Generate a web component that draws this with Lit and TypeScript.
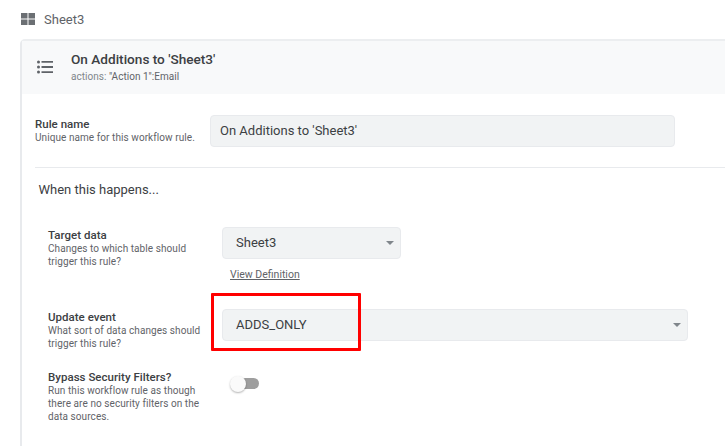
import { LitElement, html, css } from "lit";
import { customElement } from "lit/decorators.js";

const caret = html`<svg class="caret" width="8" height="4" viewBox="0 0 8 4"><path d="M0 0h8L4 4z" fill="#80868b"/></svg>`;

@customElement("app-root")
export class AppRoot extends LitElement {
  static styles = css`
    :host { display: block; width: 725px; height: 446px; overflow: hidden; background: #fff; font-family: Roboto, "Liberation Sans", sans-serif; color: #3c4043; }
    .top { display: flex; align-items: center; gap: 9px; height: 39px; padding-left: 21px; box-sizing: border-box; font-size: 13px; color: #5f6368; }
    .top svg { display: block; margin-top: -1px; }
    .card { margin-left: 20px; border-left: 2px solid #e8eaed; border-top: 2px solid #eceef0; border-top-left-radius: 5px; height: 420px; }
    .head { display: flex; align-items: center; height: 53px; background: #f8f9fa; padding-left: 15px; gap: 18px; }
    .head svg { display: block; margin-top: -2px; }
    .htext { margin-top: -2px; }
    .title { font-size: 13.6px; font-weight: 500; color: #3c4043; line-height: 17px; }
    .sub { font-size: 10px; color: #80868b; line-height: 13px; margin-top: 2px; letter-spacing: .03px; }
    .sub b { font-weight: 400; color: #5f6368; }
    .rule { display: flex; align-items: center; padding: 21px 0 0 13px; height: 32px; }
    .rule .lbl { width: 175px; margin-top: -2px; }
    .name { font-size: 11.5px; font-weight: 500; line-height: 14px; color: #3c4043; letter-spacing: .02px; }
    .desc { font-size: 10px; line-height: 13px; color: #5f6368; letter-spacing: .07px; }
    .field { box-sizing: border-box; height: 32px; background: #f1f3f4; border: 1px solid #e8eaed; border-radius: 4px; display: flex; align-items: center; justify-content: space-between; padding: 0 6px 2px 13px; font-size: 13px; color: #3c4043; }
    .caret { margin-top: 2px; }
    .w465 { width: 465px; padding-left: 9px; }
    .w179 { width: 179px; }
    .w466 { width: 466px; }
    hr { border: 0; border-top: 1px solid #e8eaed; margin: 20px 0 0 13px; }
    .when { font-size: 13px; color: #3c4043; line-height: 17px; padding: 13px 0 0 16.5px; }
    .rows { position: relative; padding: 29px 0 0 26px; }
    .row { display: flex; }
    .row .lbl { width: 174px; }
    .link { display: inline-block; font-size: 10.5px; color: #5f6368; text-decoration: underline; margin: 9px 0 0 8px; line-height: 14px; }
    .r1 { height: 61px; }
    .r2 { margin-top: 21px; height: 61px; }
    .r2 .lbl, .r1 .lbl { padding-top: 1px; }
    .toggle { position: relative; width: 30px; height: 20px; margin: 6px 0 0 8px; }
    .track { position: absolute; left: 6px; top: 2px; width: 23px; height: 11px; border-radius: 6px; background: #9e9e9e; }
    .thumb { position: absolute; left: 0; top: 0; width: 16px; height: 16px; border-radius: 50%; background: #fafafa; box-shadow: 0 1px 2px rgba(0,0,0,.3); }
    .red { position: absolute; left: 189px; top: 95px; width: 150px; height: 58px; box-sizing: border-box; border: 3px solid #ff0000; border-radius: 1px; pointer-events: none; }
  `;

  render() {
    return html`
      <div class="top">
        <svg width="14" height="12" viewBox="0 0 14 12"><path d="M0 0h6.5v5.5H0zM7.5 0H14v5.5H7.5zM0 6.5h6.5V12H0zM7.5 6.5H14V12H7.5z" fill="#6b6f73"/></svg>
        <span>Sheet3</span>
      </div>
      <div class="card">
        <div class="head">
          <svg width="16" height="14" viewBox="0 0 16 14" fill="#5f6368"><circle cx="1.5" cy="2" r="1.5"/><circle cx="1.5" cy="7" r="1.5"/><circle cx="1.5" cy="12" r="1.5"/><path d="M4.5 1h11.5v1.8H4.5zM4.5 6.1h11.5v1.8H4.5zM4.5 11.2h11.5V13H4.5z"/></svg>
          <div class="htext">
            <div class="title">On Additions to 'Sheet3'</div>
            <div class="sub">actions: <b>"Action 1":Email</b></div>
          </div>
        </div>
        <div class="rule">
          <div class="lbl">
            <div class="name">Rule name</div>
            <div class="desc">Unique name for this workflow rule.</div>
          </div>
          <div class="field w465">On Additions to 'Sheet3'</div>
        </div>
        <hr />
        <div class="when">When this happens...</div>
        <div class="rows">
          <div class="row r1">
            <div class="lbl">
              <div class="name">Target data</div>
              <div class="desc">Changes to which table should<br />trigger this rule?</div>
            </div>
            <div>
              <div class="field w179">Sheet3 ${caret}</div>
              <span class="link">View Definition</span>
            </div>
          </div>
          <div class="row r2">
            <div class="lbl">
              <div class="name">Update event</div>
              <div class="desc">What sort of data changes should<br />trigger this rule?</div>
            </div>
            <div class="field w466">ADDS_ONLY ${caret}</div>
          </div>
          <div class="row r3">
            <div class="lbl">
              <div class="name">Bypass Security Filters?</div>
              <div class="desc">Run this workflow rule as though<br />there are no security filters on the<br />data sources.</div>
            </div>
            <div class="toggle"><div class="track"></div><div class="thumb"></div></div>
          </div>
          <div class="red"></div>
        </div>
      </div>
    `;
  }
}
